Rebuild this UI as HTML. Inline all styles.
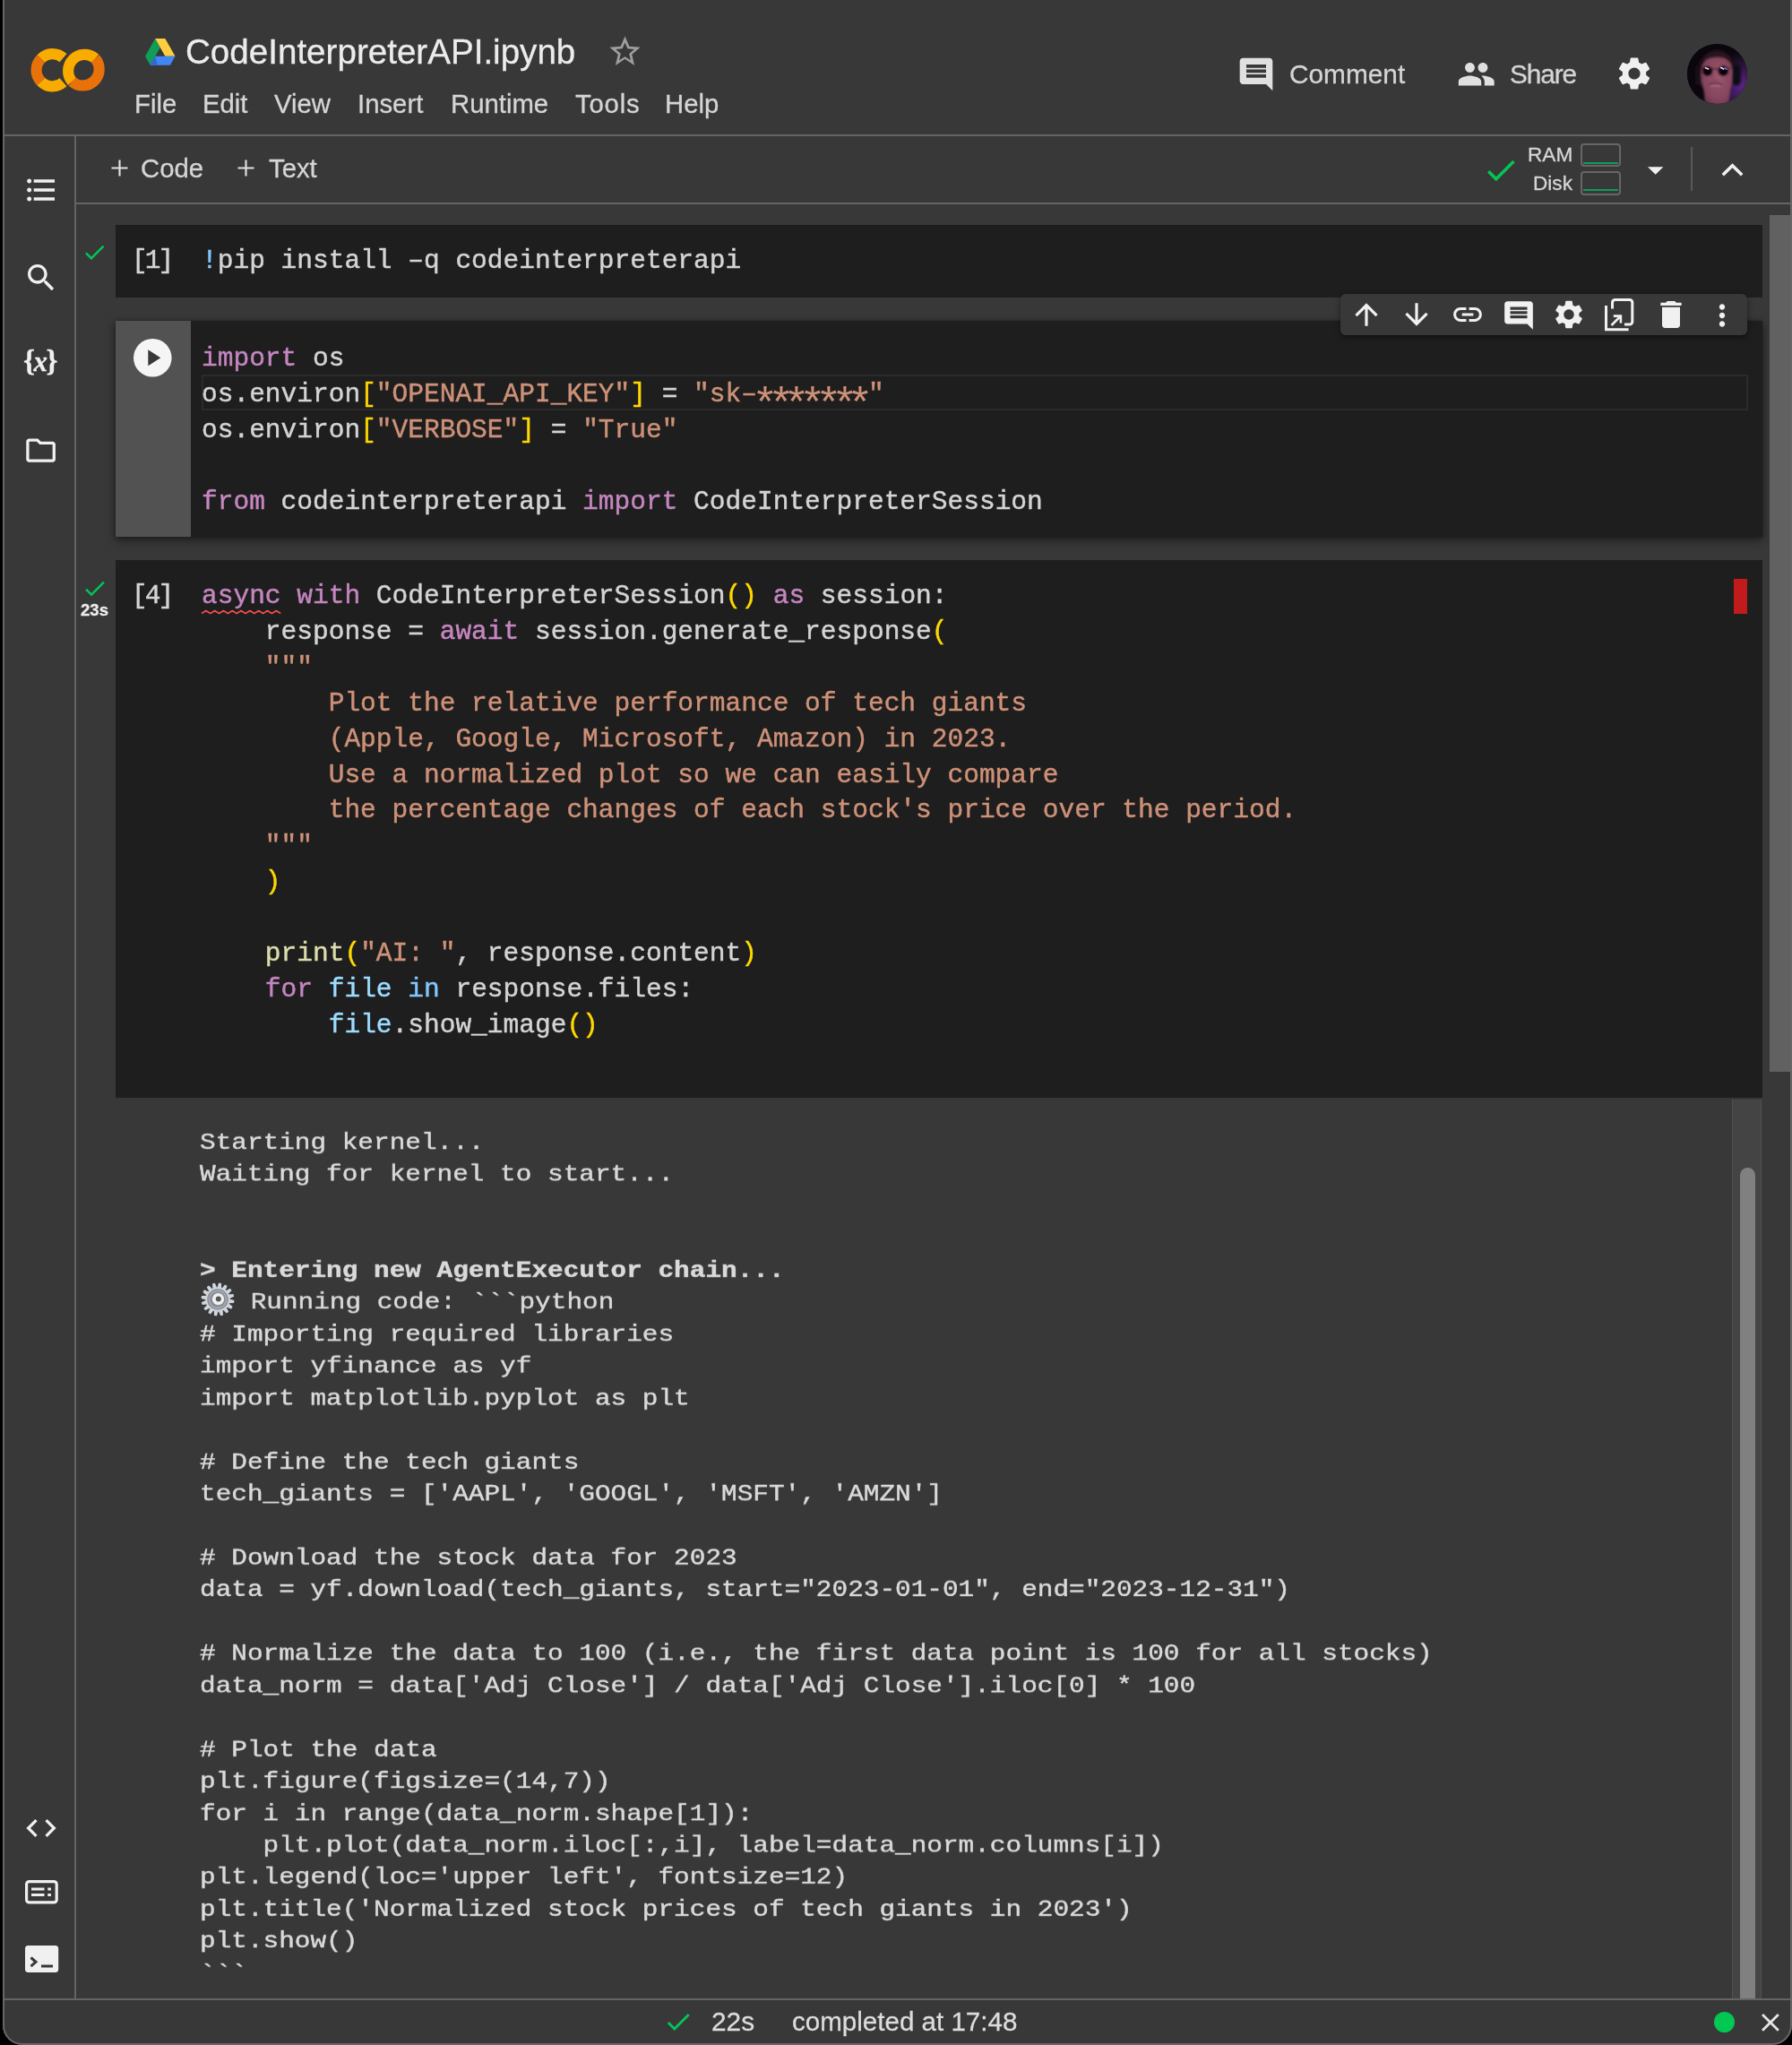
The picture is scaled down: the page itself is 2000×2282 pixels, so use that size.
<!DOCTYPE html>
<html>
<head>
<meta charset="utf-8">
<title>CodeInterpreterAPI.ipynb - Colaboratory</title>
<style>
*{box-sizing:border-box;margin:0;padding:0}
html,body{width:2000px;height:2282px;overflow:hidden;background:#000}
body{position:relative;font-family:"Liberation Sans",sans-serif;color:#d5d5d5}
.abs{position:absolute}
#win{position:absolute;left:0;top:0;width:2000px;height:2282px;background:#383838;clip-path:inset(0 0 0 3px round 0 0 22px 22px)}
#winb{position:absolute;left:3px;top:-10px;width:1997px;height:2292px;border:2px solid #666;border-radius:0 0 22px 22px;pointer-events:none}
.hl{position:absolute;background:#646464}
.t{position:absolute;white-space:pre;line-height:1;will-change:transform;-webkit-text-stroke:0.3px}
.menu{font-size:29.3px;color:#d5d5d5;top:101px}
.cell{position:absolute;left:129px;width:1838px;background:#1e1e1e}
.code{position:absolute;left:224.6px;font-family:"Liberation Mono",monospace;font-size:29.52px;line-height:39.9px;color:#d4d4d4;white-space:pre;will-change:transform;-webkit-text-stroke:0.45px}
.ast{display:inline-block;transform:translateY(13.600px) scale(1.650);-webkit-text-stroke:0;font-weight:normal}
.k{color:#c586c0}.s{color:#ce9178}.b{color:#ffd700}.f{color:#dcdcaa}.v{color:#9cdcfe}.n{color:#82c6ff}
.out{position:absolute;left:223px;top:1257.9px;font-family:"Liberation Mono",monospace;font-size:29.4px;line-height:41.45px;color:#dadada;white-space:pre;will-change:transform;transform-origin:0 0;transform:scaleY(0.86);-webkit-text-stroke:0.5px}
svg{position:absolute;overflow:visible}
</style>
</head>
<body>
<div id="win">

<!-- HEADER -->
<div class="hl" style="left:0;top:149.8px;width:2000px;height:2.2px"></div>
<!-- sidebar border -->
<div class="hl" style="left:83px;top:151px;width:2px;height:2079px"></div>
<!-- toolbar border -->
<div class="hl" style="left:85px;top:225.5px;width:1915px;height:2px"></div>
<!-- status border -->
<div class="hl" style="left:0;top:2229.5px;width:2000px;height:2px"></div>

<!--LOGO-->
<svg style="left:30px;top:50px" width="92" height="58" viewBox="30 50 92 58">
 <g fill="none" stroke-width="12.2">
  <!-- C -->
  <path d="M 70.6 64.6 A 18 18 0 0 0 45.8 65.5" stroke="#F9AB00"/>
  <path d="M 45.8 65.5 A 18 18 0 0 0 45.8 90.9" stroke="#E8710A"/>
  <path d="M 45.8 90.9 A 18 18 0 0 0 70.6 91.8" stroke="#F9AB00"/>
  <!-- O outline gap -->
  <circle cx="93.4" cy="78.2" r="18.3" stroke="#383838" stroke-width="15"/>
  <!-- O -->
  <path d="M 106.3 65.3 A 18.3 18.3 0 0 0 80.5 91.1" stroke="#F9AB00"/>
  <path d="M 80.5 91.1 A 18.3 18.3 0 0 0 106.3 65.3" stroke="#E8710A"/>
 </g>
</svg>
<!-- drive icon -->
<svg style="left:162.3px;top:42.5px" width="33.5" height="29.7" viewBox="0 0 33.5 29.7">
 <polygon points="11.17,0 0,19.8 5.58,29.7 16.75,9.9" fill="#0F9D58"/>
 <polygon points="11.17,0 22.33,0 33.5,19.8 22.33,19.8" fill="#FFCD40"/>
 <polygon points="11.17,19.8 33.5,19.8 27.9,29.7 5.58,29.7" fill="#4285F4"/>
 <polygon points="11.17,19.8 5.58,29.7 14,29.7" fill="#3367D6"/>
</svg>
<!--TITLE-->
<div class="t" id="title" style="left:207px;top:38.7px;font-size:38.6px;color:#ececec;letter-spacing:0px">CodeInterpreterAPI.ipynb</div>
<svg style="left:677.4px;top:37.3px" width="41" height="41" viewBox="0 0 24 24"><path fill="#9e9e9e" d="M22 9.24l-7.19-.62L12 2 9.19 8.63 2 9.24l5.46 4.73L5.82 21 12 16.77 18.18 21l-1.63-7.03L22 9.24zM12 15.4l-3.76 2.27 1-4.28-3.32-2.88 4.38-.38L12 6.1l1.71 4.04 4.38.38-3.32 2.88 1 4.28L12 15.4z"/></svg>
<div class="t menu" style="left:149.8px">File</div>
<div class="t menu" style="left:226px">Edit</div>
<div class="t menu" style="left:306px">View</div>
<div class="t menu" style="left:399.2px">Insert</div>
<div class="t menu" style="left:503.2px">Runtime</div>
<div class="t menu" style="left:641.6px;letter-spacing:0.8px">Tools</div>
<div class="t menu" style="left:742.3px">Help</div>
<!--HEADER-RIGHT-->
<svg style="left:1379.6px;top:61px" width="44" height="44" viewBox="0 0 24 24"><path fill="#e0e0e0" d="M21.99 4c0-1.1-.89-2-1.99-2H4c-1.1 0-2 .9-2 2v12c0 1.1.9 2 2 2h14l4 4-.01-18zM18 14H6v-2h12v2zm0-3H6V9h12v2zm0-3H6V6h12v2z"/></svg>
<div class="t" style="left:1438.8px;top:67.6px;font-size:29.8px;color:#d5d5d5">Comment</div>
<svg style="left:1625.7px;top:60.9px" width="43.5" height="43.5" viewBox="0 0 24 24"><path fill="#e0e0e0" d="M16 11c1.66 0 2.99-1.34 2.99-3S17.66 5 16 5c-1.66 0-3 1.34-3 3s1.34 3 3 3zm-8 0c1.66 0 2.99-1.34 2.99-3S9.660 5 8 5C6.340 5 5 6.340 5 8s1.340 3 3 3zm0 2c-2.330 0-7 1.170-7 3.500V19h14v-2.500c0-2.330-4.670-3.500-7-3.500zm8 0c-.290 0-.620.020-.970.050 1.160.840 1.970 1.970 1.970 3.450V19h6v-2.500c0-2.330-4.670-3.500-7-3.500z"/></svg>
<div class="t" style="left:1685px;top:67.6px;font-size:29.8px;color:#d5d5d5;letter-spacing:-1.1px">Share</div>
<svg style="left:1802px;top:60px" width="44" height="44" viewBox="0 0 24 24"><path fill="#f0f0f0" d="M19.14 12.94c.04-.3.06-.61.06-.94 0-.32-.02-.64-.07-.94l2.030-1.580c.18-.14.23-.41.12-.61l-1.920-3.320c-.12-.22-.37-.29-.59-.22l-2.390.96c-.5-.38-1.030-.7-1.620-.94l-.36-2.540c-.04-.24-.24-.41-.48-.41h-3.840c-.24 0-.43.17-.47.41l-.36 2.540c-.59.24-1.130.57-1.620.94l-2.390-.96c-.22-.08-.47 0-.59.22L2.740 8.870c-.12.21-.08.47.12.61l2.030 1.580c-.05.3-.09.63-.09.94s.02.64.07.94l-2.030 1.580c-.18.14-.23.41-.12.61l1.920 3.320c.12.22.37.29.59.22l2.390-.96c.5.38 1.030.7 1.620.94l.36 2.540c.05.24.24.41.48.41h3.840c.24 0 .44-.17.47-.41l.36-2.540c.59-.24 1.130-.56 1.620-.94l2.390.96c.22.08.47 0 .59-.22l1.920-3.320c.12-.22.07-.47-.12-.61l-2.010-1.580zM12 15.600c-1.980 0-3.600-1.620-3.600-3.600s1.620-3.600 3.600-3.600 3.600 1.620 3.600 3.600-1.620 3.600-3.600 3.600z"/></svg>
<!-- avatar -->
<svg style="left:1883px;top:48.700px" width="67" height="67" viewBox="0 0 67 67">
 <defs><clipPath id="avc"><circle cx="33.500" cy="33.500" r="33.500"/></clipPath>
 <radialGradient id="avp" cx="0.950" cy="0.720" r="0.600"><stop offset="0" stop-color="#5b2488"/><stop offset="0.450" stop-color="#371850"/><stop offset="0.800" stop-color="#1a0e22"/><stop offset="1" stop-color="#0b060e"/></radialGradient>
 <radialGradient id="avf" cx="0.550" cy="0.450" r="0.650"><stop offset="0" stop-color="#9c566e"/><stop offset="0.700" stop-color="#84455c"/><stop offset="1" stop-color="#62324a"/></radialGradient>
 <filter id="avb"><feGaussianBlur stdDeviation="0.800"/></filter></defs>
 <g clip-path="url(#avc)">
  <rect width="67" height="67" fill="#0b060e"/>
  <rect x="0" width="67" height="67" fill="url(#avp)"/>
  <g filter="url(#avb)">
  <path d="M11 40 Q8 12 33 5.500 Q57 10 55 40 Z" fill="#1d0f19"/>
  <rect x="8.500" y="24" width="8" height="22" rx="4" fill="#130c18"/>
  <rect x="50" y="23" width="9.500" height="23" rx="4.500" fill="#0e0812"/>
  <path d="M20 68 L18.500 52 Q14.500 42 15.500 28 Q18 11 33 11 Q49 11 50.500 28 Q51 42 48 52 L46.500 68 Z" fill="url(#avf)"/>
  <path d="M15 30 Q15 9 33 8.500 Q51 9 51.500 30 Q48 17 40 15.500 Q30 14 22 17 Q17 21 15 30Z" fill="#25131e"/>
  <circle cx="22.700" cy="30.200" r="5.700" fill="#0a050b"/>
  <circle cx="40.300" cy="30.200" r="5.900" fill="#0a050b"/>
  <path d="M27.500 27.800 L35 27.800" stroke="#2a1622" stroke-width="1.200"/>
  <path d="M44 27.800 L50 26.500 M18 27.800 L15.500 27" stroke="#2a1622" stroke-width="1"/>
  <path d="M24 45.300 Q31.500 42.800 39 45.300" stroke="#5a2e40" stroke-width="1.800" fill="none"/>
  <path d="M25.500 46.800 Q31.500 45.800 37.500 46.800" stroke="#c08094" stroke-width="1" fill="none"/>
  <path d="M28.500 31 Q27 39.500 29.500 40.500 Q32 41.500 35 40" stroke="#7a4058" stroke-width="1.100" fill="none"/>
  </g>
  <path d="M20.500 26.800 l3.200 1.200 M37.800 26.500 l2.800 1.500" stroke="#e6e0f2" stroke-width="1.700" stroke-linecap="round"/>
  <path d="M42 27 l2.200 1.200" stroke="#8a6ad0" stroke-width="1.700" stroke-linecap="round"/>
 </g>
</svg>
<!--TOOLBAR-->
<svg style="left:124.2px;top:178.3px" width="19" height="19" viewBox="0 0 20 20"><path d="M10 0.500V19.500M0.500 10H19.500" stroke="#e0e0e0" stroke-width="2.300" fill="none"/></svg>
<div class="t" style="left:157px;top:173px;font-size:29.3px;color:#d5d5d5">Code</div>
<svg style="left:265px;top:178.3px" width="19" height="19" viewBox="0 0 20 20"><path d="M10 0.500V19.500M0.500 10H19.500" stroke="#e0e0e0" stroke-width="2.300" fill="none"/></svg>
<div class="t" style="left:299.500px;top:173px;font-size:29.3px;color:#d5d5d5">Text</div>
<!-- connected check -->
<svg style="left:1654px;top:168.5px" width="42" height="42" viewBox="0 0 24 24"><path fill="#00c853" d="M9 16.170L4.830 12l-1.420 1.410L9 19 21 7l-1.410-1.410z"/></svg>
<div class="t" style="left:1704.5px;top:161.5px;font-size:22.6px;color:#d5d5d5">RAM</div>
<div class="t" style="left:1710.5px;top:193.5px;font-size:22.6px;color:#d5d5d5">Disk</div>
<div class="abs" style="left:1763.5px;top:159.5px;width:45.5px;height:26.5px;border:2px solid #666;border-radius:4px"><div class="abs" style="left:1px;right:1px;bottom:1px;height:2px;background:#0f9d58"></div></div>
<div class="abs" style="left:1763.5px;top:191px;width:45.5px;height:26.5px;border:2px solid #666;border-radius:4px"><div class="abs" style="left:1px;right:1px;bottom:3px;height:2px;background:#0f9d58"></div></div>
<svg style="left:1838.6px;top:185.8px" width="17.4" height="9" viewBox="0 0 10 5"><path d="M0 0L5 5L10 0Z" fill="#f1f1f1"/></svg>
<div class="abs" style="left:1887px;top:164px;width:2px;height:49px;background:#585858"></div>
<svg style="left:1921px;top:182px" width="25" height="15" viewBox="0 0 25 15"><path d="M1.800 13.200L12.500 2.800L23.200 13.200" stroke="#f0f0f0" stroke-width="3.600" fill="none"/></svg>
<!--SIDEBAR-->
<!-- toc -->
<svg style="left:25.600px;top:192.300px" width="40" height="40" viewBox="0 0 24 24"><path fill="#f0f0f0" d="M4 10.500c-.83 0-1.500.67-1.500 1.500s.67 1.500 1.500 1.500 1.500-.67 1.500-1.500-.67-1.500-1.500-1.500zm0-6c-.83 0-1.500.67-1.500 1.500S3.170 7.500 4 7.500 5.500 6.830 5.500 6 4.830 4.500 4 4.500zm0 12c-.83 0-1.500.68-1.500 1.500s.68 1.500 1.500 1.500 1.500-.68 1.500-1.500-.67-1.500-1.500-1.500zM7 19h14v-2H7v2zm0-6h14v-2H7v2zm0-8v2h14V5H7z"/></svg>
<!-- search -->
<svg style="left:25.500px;top:289.500px" width="40" height="40" viewBox="0 0 24 24"><path fill="#f0f0f0" d="M15.500 14h-.79l-.28-.27C15.410 12.590 16 11.110 16 9.500 16 5.910 13.090 3 9.500 3S3 5.910 3 9.500 5.910 16 9.500 16c1.610 0 3.090-.59 4.230-1.570l.27.28v.79l5 4.990L20.490 19l-4.990-5zm-6 0C7.010 14 5 11.990 5 9.500S7.010 5 9.500 5 14 7.010 14 9.500 11.990 14 9.500 14z"/></svg>
<!-- {x} -->
<div class="t" style="left:26px;top:387px;font-family:'Liberation Serif',serif;font-size:33px;font-weight:bold;color:#f0f0f0;letter-spacing:-1.5px">{<i style="font-size:31px">x</i>}</div>
<!-- folder -->
<svg style="left:26.2px;top:483.2px" width="39.2" height="39.2" viewBox="0 0 24 24"><path fill="#f0f0f0" d="M9.170 6l2 2H20v10H4V6h5.170M10 4H4c-1.100 0-1.990.9-1.990 2L2 18c0 1.100.9 2 2 2h16c1.100 0 2-.9 2-2V8c0-1.100-.9-2-2-2h-8l-2-2z"/></svg>
<!-- code -->
<svg style="left:25.700px;top:2019.500px" width="40" height="40" viewBox="0 0 24 24"><path fill="#f0f0f0" d="M9.400 16.600L4.800 12l4.600-4.600L8 6l-6 6 6 6 1.400-1.400zm5.200 0l4.600-4.600-4.600-4.600L16 6l6 6-6 6-1.400-1.400z"/></svg>
<!-- command palette -->
<svg style="left:27.500px;top:2097.800px" width="36.800" height="26.500" viewBox="0 0 36.800 26.500"><rect x="1.600" y="1.600" width="33.600" height="23.300" rx="3" fill="none" stroke="#f0f0f0" stroke-width="3.200"/><path d="M7 10h14.500M7 16.500h14.500" stroke="#f0f0f0" stroke-width="3"/><path d="M25.300 10h3.600M25.300 16.500h3.600" stroke="#f0f0f0" stroke-width="3"/></svg>
<!-- terminal -->
<svg style="left:27.500px;top:2171.400px" width="37.200" height="30" viewBox="0 0 37.200 30"><rect width="37.200" height="30" rx="3.500" fill="#f0f0f0"/><path d="M6.500 13.500l5.500 4.800-5.500 4.800" stroke="#383838" stroke-width="3" fill="none"/><path d="M18 23h13" stroke="#383838" stroke-width="3"/></svg>
<!--CELLS-->
<!-- cell 1 -->
<div class="cell" style="top:250.5px;height:81.5px"></div>
<svg style="left:90.9px;top:267.2px" width="29" height="29" viewBox="0 0 24 24"><path fill="#00c853" d="M9 16.170L4.830 12l-1.420 1.410L9 19 21 7l-1.410-1.410z"/></svg>
<div class="code" style="left:147.2px;top:272px;letter-spacing:-3px">[1]</div>
<div class="code" style="top:272px"><span class="n">!</span>pip install –q codeinterpreterapi</div>

<!-- cell 2 (focused) -->
<div class="cell" style="top:358px;height:241px;box-shadow:0 4px 10px rgba(0,0,0,.45),0 0 4px rgba(0,0,0,.3)"><div class="abs" style="left:0;top:0;width:84px;height:241px;background:#525252"></div></div>
<svg style="left:149.3px;top:378.2px" width="42.600" height="42.600" viewBox="0 0 42.600 42.600"><circle cx="21.300" cy="21.300" r="21.300" fill="#f5f5f5"/><path d="M16.300 12.300V30.300L30.300 21.300Z" fill="#383838"/></svg>
<div class="abs" style="left:224.500px;top:418.300px;width:1726px;height:40.200px;border:2.600px solid #2b2b2b"></div>
<div class="code" style="top:380.5px"><span class="k">import</span> os
os.environ<span class="b">[</span><span class="s">"OPENAI_API_KEY"</span><span class="b">]</span> = <span class="s">"sk–<span class="ast">*</span><span class="ast">*</span><span class="ast">*</span><span class="ast">*</span><span class="ast">*</span><span class="ast">*</span><span class="ast">*</span>"</span>
os.environ<span class="b">[</span><span class="s">"VERBOSE"</span><span class="b">]</span> = <span class="s">"True"</span>

<span class="k">from</span> codeinterpreterapi <span class="k">import</span> CodeInterpreterSession</div>

<!-- cell toolbar -->
<div class="abs" style="left:1496px;top:328px;width:454px;height:46px;background:#383838;border-radius:6px;box-shadow:0 2px 6px rgba(0,0,0,.5)"></div>
<!--CELLTOOLS-->
<svg style="left:1505.6px;top:332.0px" width="38" height="38" viewBox="0 0 24 24"><path fill="#f1f1f1" d="M4 12l1.410 1.410L11 7.830V20h2V7.830l5.580 5.590L20 12l-8-8-8 8z"/></svg>
<svg style="left:1562.0px;top:332.0px" width="38" height="38" viewBox="0 0 24 24"><path fill="#f1f1f1" d="M20 12l-1.410-1.410L13 16.170V4h-2v12.170l-5.580-5.590L4 12l8 8 8-8z"/></svg>
<svg style="left:1619.0px;top:332.0px" width="38" height="38" viewBox="0 0 24 24"><path fill="#f1f1f1" d="M3.900 12c0-1.710 1.390-3.100 3.100-3.100h4V7H7c-2.760 0-5 2.240-5 5s2.240 5 5 5h4v-1.900H7c-1.710 0-3.100-1.390-3.100-3.100zM8 13h8v-2H8v2zm9-6h-4v1.900h4c1.710 0 3.100 1.390 3.100 3.100s-1.390 3.100-3.100 3.100h-4V17h4c2.760 0 5-2.240 5-5s-2.240-5-5-5z"/></svg>
<svg style="left:1675.8px;top:333.0px" width="38" height="38" viewBox="0 0 24 24"><path fill="#f1f1f1" d="M21.990 4c0-1.100-.89-2-1.990-2H4c-1.100 0-2 .9-2 2v12c0 1.100.9 2 2 2h14l4 4-.01-18zM18 14H6v-2h12v2zm0-3H6V9h12v2zm0-3H6V6h12v2z"/></svg>
<svg style="left:1732.0px;top:332.0px" width="38" height="38" viewBox="0 0 24 24"><path fill="#f1f1f1" d="M19.140 12.940c.04-.3.06-.61.06-.94 0-.32-.02-.64-.07-.94l2.030-1.580c.18-.14.23-.41.12-.61l-1.920-3.320c-.12-.22-.37-.29-.59-.22l-2.390.96c-.5-.38-1.030-.7-1.620-.94l-.36-2.540c-.04-.24-.24-.41-.48-.41h-3.840c-.24 0-.43.17-.47.41l-.36 2.540c-.59.24-1.130.57-1.620.94l-2.390-.96c-.22-.08-.47 0-.59.22L2.740 8.870c-.12.21-.08.47.12.61l2.030 1.580c-.05.3-.09.63-.09.94s.02.64.07.94l-2.030 1.580c-.18.14-.23.41-.12.61l1.920 3.320c.12.22.37.29.59.22l2.390-.96c.5.38 1.030.7 1.620.94l.36 2.540c.05.24.24.41.48.41h3.840c.24 0 .44-.17.47-.41l.36-2.540c.59-.24 1.130-.56 1.620-.94l2.390.96c.22.08.47 0 .59-.22l1.920-3.320c.12-.22.07-.47-.12-.61l-2.010-1.580zM12 15.600c-1.980 0-3.600-1.620-3.600-3.600s1.620-3.600 3.600-3.600 3.600 1.620 3.600 3.600-1.620 3.600-3.600 3.600z"/></svg>
<svg style="left:1790px;top:333px" width="34" height="37" viewBox="0 0 34 37"><g fill="none" stroke="#f1f1f1"><path d="M9.500 11.500V4.500a3 3 0 0 1 3-3H28.800a3 3 0 0 1 3 3V26a3 3 0 0 1-3 3H23" stroke-width="3"/><path d="M2.500 8V34.800H27.600" stroke-width="3"/><path d="M8.500 30L18.300 20.200M10.800 19.600H18.900V27.400" stroke-width="2.600"/></g></svg>
<svg style="left:1845.0px;top:331.0px" width="40" height="40" viewBox="0 0 24 24"><path fill="#f1f1f1" d="M6 19c0 1.100.9 2 2 2h8c1.100 0 2-.9 2-2V7H6v12zM19 4h-3.500l-1-1h-5l-1 1H5v2h14V4z"/></svg>
<svg style="left:1902.5px;top:332.5px" width="38" height="38" viewBox="0 0 24 24"><path fill="#f1f1f1" d="M12 8c1.100 0 2-.9 2-2s-.9-2-2-2-2 .9-2 2 .9 2 2 2zm0 2c-1.100 0-2 .9-2 2s.9 2 2 2 2-.9 2-2-.9-2-2-2zm0 6c-1.100 0-2 .9-2 2s.9 2 2 2 2-.9 2-2-.9-2-2-2z"/></svg>

<!-- cell 3 -->
<div class="cell" style="top:625px;height:600px"></div>
<svg style="left:90.700px;top:642px" width="29.500" height="29.500" viewBox="0 0 24 24"><path fill="#00c853" d="M9 16.170L4.830 12l-1.420 1.410L9 19 21 7l-1.410-1.410z"/></svg>
<div class="t" style="left:90.400px;top:671.800px;font-size:18.600px;font-weight:bold;color:#ececec">23s</div>
<div class="code" style="left:147.2px;top:646.2px;letter-spacing:-3px">[4]</div>
<div class="abs" style="left:1935.3px;top:645.8px;width:15px;height:39.600px;background:#c21b1b"></div>
<div class="code" style="top:646.2px"><span class="k sq">async</span> <span class="k">with</span> CodeInterpreterSession<span class="b">()</span> <span class="k">as</span> session:
    response = <span class="k">await</span> session.generate_response<span class="b">(</span>
    <span class="s">"""</span>
<span class="s">        Plot the relative performance of tech giants</span>
<span class="s">        (Apple, Google, Microsoft, Amazon) in 2023.</span>
<span class="s">        Use a normalized plot so we can easily compare</span>
<span class="s">        the percentage changes of each stock's price over the period.</span>
<span class="s">    """</span>
    <span class="b">)</span>

    <span class="f">print</span><span class="b">(</span><span class="s">"AI: "</span>, response.content<span class="b">)</span>
    <span class="k">for</span> <span class="v">file</span> <span class="n">in</span> response.files:
        <span class="v">file</span>.show_image<span class="b">()</span></div>
<svg style="left:224.600px;top:679.500px" width="89" height="6" viewBox="0 0 89 6"><path d="M0 4.500 l4.900 -3 l4.900 3 l4.900 -3 l4.900 3 l4.900 -3 l4.900 3 l4.900 -3 l4.900 3 l4.900 -3 l4.900 3 l4.900 -3 l4.900 3 l4.900 -3 l4.900 3 l4.900 -3 l4.900 3 l4.900 -3 l4.900 3" stroke="#f14c4c" stroke-width="1.800" fill="none"/></svg>
<!--OUTPUT-->
<div class="out">Starting kernel...
Waiting for kernel to start...


<b>&gt; Entering new AgentExecutor chain...</b>
<span style="display:inline-block;width:39px"></span> Running code: ```python
# Importing required libraries
import yfinance as yf
import matplotlib.pyplot as plt

# Define the tech giants
tech_giants = ['AAPL', 'GOOGL', 'MSFT', 'AMZN']

# Download the stock data for 2023
data = yf.download(tech_giants, start="2023-01-01", end="2023-12-31")

# Normalize the data to 100 (i.e., the first data point is 100 for all stocks)
data_norm = data['Adj Close'] / data['Adj Close'].iloc[0] * 100

# Plot the data
plt.figure(figsize=(14,7))
for i in range(data_norm.shape[1]):
    plt.plot(data_norm.iloc[:,i], label=data_norm.columns[i])
plt.legend(loc='upper left', fontsize=12)
plt.title('Normalized stock prices of tech giants in 2023')
plt.show()
```</div>
<!-- bottom mask for clipped last line -->
<div class="abs" style="left:200px;top:2197px;width:1720px;height:32px;background:#383838"></div>
<!-- gear emoji -->
<svg style="left:223.500px;top:1430.600px" width="38" height="38" viewBox="-19 -19 38 38">
 <g fill="#cfd5dc"><circle r="13.600"/><polygon points="-2.500,-12 -1.500,-18.400 1.500,-18.400 2.500,-12" transform="rotate(8.0)"/><polygon points="-2.500,-12 -1.500,-18.400 1.500,-18.400 2.500,-12" transform="rotate(30.5)"/><polygon points="-2.500,-12 -1.500,-18.400 1.500,-18.400 2.500,-12" transform="rotate(53.0)"/><polygon points="-2.500,-12 -1.500,-18.400 1.500,-18.400 2.500,-12" transform="rotate(75.5)"/><polygon points="-2.500,-12 -1.500,-18.400 1.500,-18.400 2.500,-12" transform="rotate(98.0)"/><polygon points="-2.500,-12 -1.500,-18.400 1.500,-18.400 2.500,-12" transform="rotate(120.5)"/><polygon points="-2.500,-12 -1.500,-18.400 1.500,-18.400 2.500,-12" transform="rotate(143.0)"/><polygon points="-2.500,-12 -1.500,-18.400 1.500,-18.400 2.500,-12" transform="rotate(165.5)"/><polygon points="-2.500,-12 -1.500,-18.400 1.500,-18.400 2.500,-12" transform="rotate(188.0)"/><polygon points="-2.500,-12 -1.500,-18.400 1.500,-18.400 2.500,-12" transform="rotate(210.5)"/><polygon points="-2.500,-12 -1.500,-18.400 1.500,-18.400 2.500,-12" transform="rotate(233.0)"/><polygon points="-2.500,-12 -1.500,-18.400 1.500,-18.400 2.500,-12" transform="rotate(255.5)"/><polygon points="-2.500,-12 -1.500,-18.400 1.500,-18.400 2.500,-12" transform="rotate(278.0)"/><polygon points="-2.500,-12 -1.500,-18.400 1.500,-18.400 2.500,-12" transform="rotate(300.5)"/><polygon points="-2.500,-12 -1.500,-18.400 1.500,-18.400 2.500,-12" transform="rotate(323.0)"/><polygon points="-2.500,-12 -1.500,-18.400 1.500,-18.400 2.500,-12" transform="rotate(345.5)"/></g>
 <circle r="11.800" fill="#8d9097"/><circle r="10.300" fill="#a9adb3"/><circle r="8.800" fill="#8a8d94"/><circle cx="0.500" cy="-0.300" r="6.600" fill="#eef1f5"/><circle cx="0.800" cy="-0.500" r="3" fill="#5e564e"/>
</svg>
<!-- output scrollbar -->
<div class="abs" style="left:1933px;top:1227px;width:32.500px;height:1003px;background:#444;border-left:1.500px solid #515151;border-right:1.500px solid #515151"></div>
<div class="abs" style="left:1941.800px;top:1302.500px;width:16.800px;height:940px;background:#808080;border-radius:8.400px"></div>
<div class="hl" style="left:0;top:2229.500px;width:2000px;height:2px"></div>
<div class="abs" style="left:0;top:2231.500px;width:2000px;height:51px;background:#383838"></div>
<!-- page scrollbar -->
<div class="abs" style="left:1975px;top:240px;width:23px;height:955.500px;background:#616161"></div>

<!--STATUS-->
<svg style="left:739.800px;top:2238.800px" width="34" height="34" viewBox="0 0 24 24"><path fill="#00c853" d="M9 16.170L4.830 12l-1.420 1.410L9 19 21 7l-1.410-1.410z"/></svg>
<div class="t" style="left:794px;top:2240.500px;font-size:29.800px;color:#dcdcdc">22s</div>
<div class="t" style="left:884px;top:2240.500px;font-size:29.550px;color:#dcdcdc">completed at 17:48</div>
<div class="abs" style="left:1913.300px;top:2245px;width:23.200px;height:23.200px;border-radius:50%;background:#00c853"></div>
<svg style="left:1965.500px;top:2247px" width="19.800" height="19.800" viewBox="0 0 19.800 19.800"><path d="M1 1L18.800 18.800M18.800 1L1 18.800" stroke="#e4e4e4" stroke-width="2.800" fill="none"/></svg>

</div>
<div id="winb"></div>
</body>
</html>
